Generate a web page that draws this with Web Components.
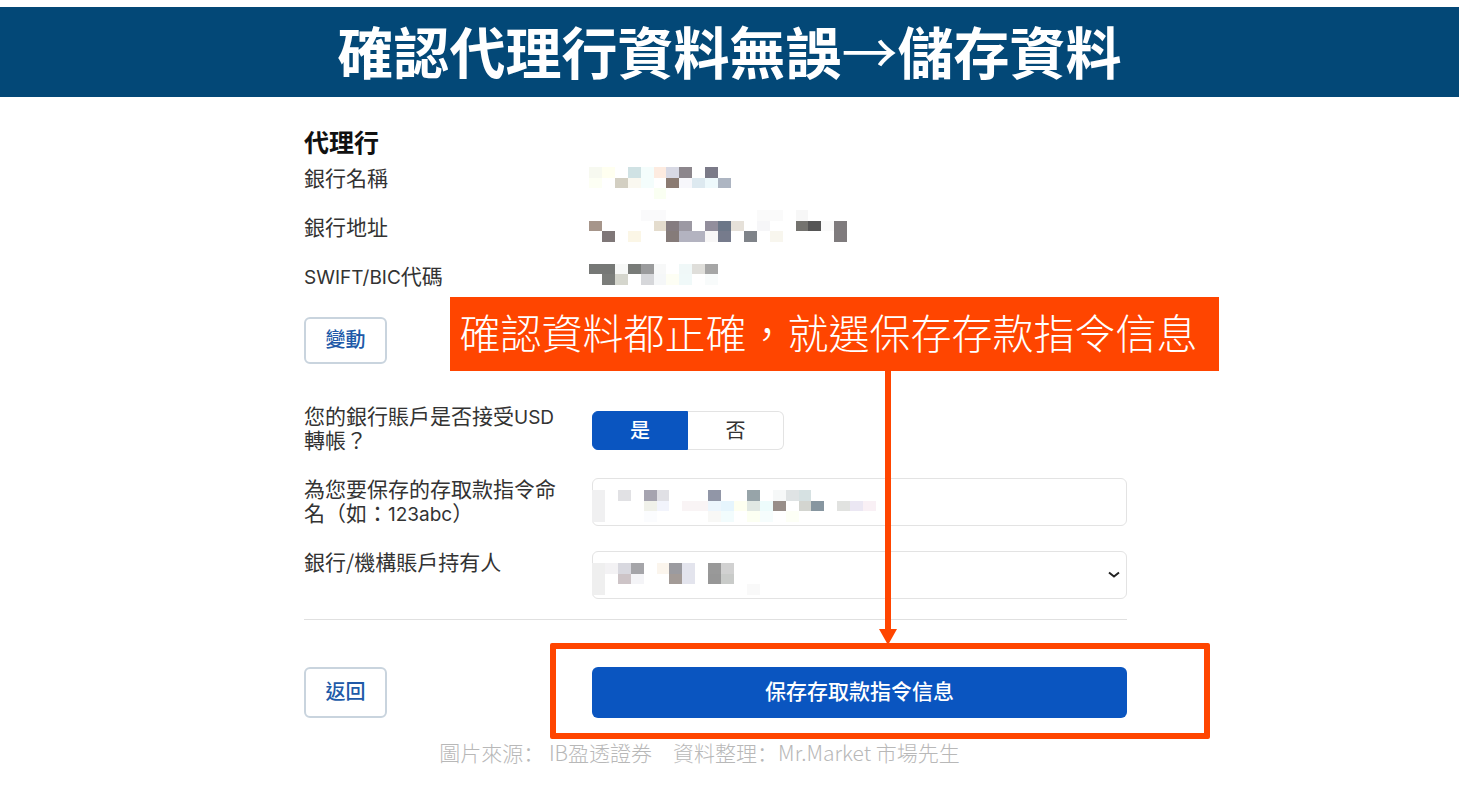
<!DOCTYPE html>
<html lang="zh-Hant">
<head>
<meta charset="utf-8">
<meta name="viewport" content="width=device-width, initial-scale=1">
<title>確認代理行資料</title>
<style>
    body {
        margin: 0;
        background: #fff;
        color: #333;
        font: 21px/24px "Noto Sans CJK TC", sans-serif;
    }

    .latin {
        font-family: Inter, sans-serif;
        font-size: 19px;
        line-height: 1;
    }
</style>
</head>
<body>

<slide-banner>確認代理行資料無誤<span style="font-weight: 400">→</span>儲存資料</slide-banner>

<bank-form>
    <bank-details>
        <span slot="title">代理行</span>
        <span slot="name">銀行名稱</span>
        <span slot="address">銀行地址</span>
        <span slot="code"><span class="latin">SWIFT/BIC</span>代碼</span>
    </bank-details>
    <outline-button class="change">變動</outline-button>
    <choice-field>您的銀行賬戶是否接受<span class="latin">USD</span>轉帳？</choice-field>
    <text-field>為您要保存的存取款指令命名（如：<span class="latin">123abc</span>）</text-field>
    <select-field>銀行/機構賬戶持有人</select-field>
    <form-actions>
        <outline-button slot="back" class="tall">返回</outline-button>
        <save-button slot="save">保存存取款指令信息</save-button>
    </form-actions>
    <note-callout slot="note">確認資料都正確，就選保存存款指令信息</note-callout>
</bank-form>

<source-note lang="zh-Hans">圖片來源： IB盈透證券　資料整理：Mr.Market 市場先生</source-note>

<script>
    function attach(el, html) {
        const template = document.createElement('template');
        template.innerHTML = html;
        el.attachShadow({ mode: 'open' }).appendChild(template.content.cloneNode(true));
    }

    // shared look of the label / control rows
    const rowStyle = `
        :host {
            display: grid;
            grid-template-columns: 288px 1fr;
            min-height: 50px;
            margin-bottom: 23px;
        }
        label, .label {
            padding-right: 36px;
        }
        .control {
            position: relative;
            margin-top: 2px;
        }
        input, select {
            box-sizing: border-box;
            width: 100%;
            height: 48px;
            border: 1px solid #e3e3e3;
            border-radius: 6px;
            background: #fff;
            font: inherit;
        }
        pixel-mask {
            position: absolute;
            left: 0;
            top: 12px;
        }
    `;

    // hides private values: one "column row colour" entry per block
    class PixelMask extends HTMLElement {
        connectedCallback() {
            const rows = Number(this.getAttribute('rows'));
            const blocks = this.getAttribute('blocks').trim().split(/\s*;\s*/).map(block => {
                const [x, y, fill] = block.split(' ');
                return `<rect x="${x}" y="${y}" width="1" height="1" fill="#${fill}"/>`;
            }).join('');
            attach(this, `
                <style>
                :host { display: block; pointer-events: none; }
                svg { display: block; }
                </style>
                <svg width="284" height="${Math.round(rows * 10.7)}" viewBox="0 0 22 ${rows}"
                    preserveAspectRatio="none" shape-rendering="crispEdges" aria-hidden="true">${blocks}</svg>
            `);
        }
    }

    class SlideBanner extends HTMLElement {
        constructor() {
            super();
            attach(this, `
                <style>
                :host {
                    display: block;
                    margin-top: 7px;
                    padding-bottom: 4px;
                    background: #034877;
                    color: #fff;
                    text-align: center;
                }
                h1 {
                    margin: 0;
                    font-size: 56px;
                    line-height: 86px;
                    font-weight: 700;
                }
                </style>
                <h1><slot></slot></h1>
            `);
        }
    }

    class BankForm extends HTMLElement {
        constructor() {
            super();
            attach(this, `
                <style>
                :host {
                    display: grid;
                    grid-template-columns: 304fr 823fr 332fr;
                }
                form {
                    grid-column: 2;
                    position: relative;
                    padding-top: 26px;
                }
                ::slotted(.change) {
                    margin: 28px 0 39px;
                }
                </style>
                <form>
                    <slot></slot>
                    <slot name="note"></slot>
                </form>
            `);
        }
    }

    class BankDetails extends HTMLElement {
        constructor() {
            super();
            attach(this, `
                <style>
                :host { display: block; }
                h2 {
                    margin: 0 0 6px;
                    color: #111;
                    font-size: 25px;
                    line-height: 36px;
                    font-weight: 700;
                }
                .list {
                    display: grid;
                    grid-template-columns: 285px 1fr;
                    height: 124px;
                }
                .names {
                    display: grid;
                    grid-auto-rows: 24px;
                    row-gap: 25px;
                }
                pixel-mask {
                    padding-top: 2px;
                }
                </style>
                <h2><slot name="title"></slot></h2>
                <div class="list">
                    <div class="names">
                        <slot name="name"></slot>
                        <slot name="address"></slot>
                        <slot name="code"></slot>
                    </div>
                    <pixel-mask rows="11" blocks="
                        0 0 f7f9f0; 1 0 fffff0; 3 0 d0e2e4; 4 0 f4fdfc; 5 0 fdebe0; 6 0 d8d9e4; 7 0 8c868c; 9 0 7b7a88;
                        0 1 fdfff4; 2 1 d3cfc2; 3 1 faf8f0; 4 1 f4fdfc; 6 1 8b7b72; 7 1 f7f7fb; 8 1 dde9f0; 9 1 eef9fc; 10 1 adb5c2;
                        5 2 fafff2;
                        4 4 fafafb; 5 4 fafafb; 13 4 fafafa; 14 4 fafafa; 16 4 f7f7f7;
                        0 5 a6958a; 5 5 e4dccd; 6 5 857c80; 7 5 9c99a3; 9 5 928e9c; 10 5 6c7788; 11 5 e6e1d9; 13 5 f6f6f8; 16 5 74736f; 17 5 555555; 18 5 fafafa; 19 5 7f7b7d;
                        1 6 7f7778; 3 6 fbf6e6; 6 6 857b79; 7 6 b3b3c0; 8 6 b3b3c0; 9 6 f8f7f7; 10 6 767b8c; 12 6 7f8389; 14 6 f8f6ee; 19 6 7f7b7d;
                        0 9 767876; 1 9 767876; 2 9 f7f8f7; 3 9 787b78; 4 9 9a9b9c; 5 9 f7f8f8; 7 9 f0f8f8; 8 9 dfdeda; 9 9 a6a6a6;
                        1 10 7b7d7a; 2 10 d5d6cd; 4 10 d6d7da; 5 10 f5f7f8; 6 10 fdfef4; 7 10 f0f9f9; 9 10 f8fbfb"></pixel-mask>
                </div>
            `);
        }
    }

    class OutlineButton extends HTMLElement {
        constructor() {
            super();
            attach(this, `
                <style>
                :host { display: block; }
                button {
                    box-sizing: border-box;
                    width: 83px;
                    height: 47px;
                    padding: 0 0 4px;
                    border: 2px solid #c9d4de;
                    border-radius: 6px;
                    background: #fff;
                    color: #2059a8;
                    font: inherit;
                    font-size: 20px;
                    font-weight: 500;
                    cursor: pointer;
                }
                :host(.tall) button { height: 51px; }
                </style>
                <button type="button"><slot></slot></button>
            `);
        }
    }

    class ChoiceField extends HTMLElement {
        constructor() {
            super();
            attach(this, `
                <style>
                ${rowStyle}
                .toggle {
                    display: inline-grid;
                    grid-template-columns: 96px 96px;
                    margin-top: 6px;
                }
                .toggle label {
                    box-sizing: border-box;
                    height: 39px;
                    padding: 0;
                    border: 1px solid #e3e3e3;
                    border-left: 0;
                    border-radius: 0 6px 6px 0;
                    font-size: 20px;
                    line-height: 36px;
                    text-align: center;
                    cursor: pointer;
                }
                .toggle label:first-child {
                    border: 1px solid #0a55c0;
                    border-radius: 6px 0 0 6px;
                }
                .toggle label:has(:checked) {
                    background: #0a55c0;
                    color: #fff;
                    font-weight: 500;
                }
                .toggle input {
                    position: absolute;
                    width: 1px;
                    height: 1px;
                    margin: 0;
                    opacity: 0;
                }
                </style>
                <div class="label" id="question"><slot></slot></div>
                <div class="control">
                    <div class="toggle" role="radiogroup" aria-labelledby="question">
                        <label><input type="radio" name="usd" value="yes" checked>是</label>
                        <label><input type="radio" name="usd" value="no">否</label>
                    </div>
                </div>
            `);
        }
    }

    class TextField extends HTMLElement {
        constructor() {
            super();
            attach(this, `
                <style>${rowStyle}</style>
                <label for="name"><slot></slot></label>
                <div class="control">
                    <input id="name" type="text">
                    <pixel-mask rows="3" blocks="
                        0 0 f0f0f1; 2 0 e1e1e4; 4 0 a6a4b0; 5 0 e0e0e5; 9 0 9196a7; 12 0 97a4a9; 14 0 f6f8f8; 15 0 dfe3e4; 16 0 d6e1e2;
                        0 1 f0f0f1; 4 1 f0f1ea; 5 1 f2f4fc; 7 1 f9f4f5; 8 1 f9f4f5; 9 1 edf6fd; 10 1 e6f5fd; 11 1 fefff0; 12 1 e1e8e3; 13 1 edfcfc; 14 1 988e89; 16 1 d3d5d0; 17 1 8796a0; 19 1 e1e2e0; 20 1 ebe7f3; 21 1 f9f0f5;
                        0 2 f0f0f1; 4 2 fbfcfe; 9 2 f8f8f6; 10 2 f2fcfd; 12 2 fcfff2; 13 2 f6fdfd; 15 2 fdfff6"></pixel-mask>
                </div>
            `);
        }
    }

    class SelectField extends HTMLElement {
        constructor() {
            super();
            attach(this, `
                <style>
                ${rowStyle}
                :host { margin-bottom: 20px; }
                select {
                    appearance: none;
                }
                .chevron {
                    position: absolute;
                    right: 7px;
                    top: 20px;
                    pointer-events: none;
                }
                </style>
                <label for="holder"><slot></slot></label>
                <div class="control">
                    <select id="holder"><option></option></select>
                    <pixel-mask rows="3" blocks="
                        0 0 efefef; 1 0 f3f2f4; 2 0 d8d8df; 3 0 a5a5a9; 5 0 fbf5ed; 6 0 9b9ba0; 7 0 e3e4ed; 9 0 999999; 10 0 d1d1d1;
                        0 1 efefef; 2 1 cdc4c7; 3 1 f4f4f7; 6 1 a39b97; 7 1 e3e4ed; 9 1 979797; 10 1 c9cbc9;
                        0 2 efefef; 12 2 f9f9f9"></pixel-mask>
                    <svg class="chevron" width="12" height="8" viewBox="0 0 12 8" aria-hidden="true">
                        <path d="M1 1.5 6 5.5 11 1.5" fill="none" stroke="#222" stroke-width="2"/>
                    </svg>
                </div>
            `);
        }
    }

    class FormActions extends HTMLElement {
        constructor() {
            super();
            attach(this, `
                <style>
                :host {
                    display: grid;
                    grid-template-columns: 288px 1fr;
                    padding-top: 47px;
                    border-top: 1px solid #e0e0e0;
                }
                </style>
                <slot name="back"></slot>
                <slot name="save"></slot>
            `);
        }
    }

    class SaveButton extends HTMLElement {
        constructor() {
            super();
            attach(this, `
                <style>
                :host {
                    display: block;
                    position: relative;
                }
                button {
                    width: 100%;
                    height: 51px;
                    padding: 0 0 6px;
                    border: 0;
                    border-radius: 6px;
                    background: #0a55c0;
                    color: #fff;
                    font: inherit;
                    font-weight: 500;
                    cursor: pointer;
                }
                /* marker frame drawn round the button */
                .frame {
                    position: absolute;
                    inset: -24px -83px -21px -42px;
                    border: 6px solid #ff4500;
                    border-radius: 2px;
                    pointer-events: none;
                }
                </style>
                <button type="submit"><slot></slot></button>
                <div class="frame"></div>
            `);
        }
    }

    class NoteCallout extends HTMLElement {
        constructor() {
            super();
            attach(this, `
                <style>
                :host {
                    position: absolute;
                    left: 146px;
                    right: -92px;
                    top: 200px;
                    pointer-events: none;
                }
                .box {
                    box-sizing: border-box;
                    height: 74px;
                    padding-right: 12px;
                    background: #ff4500;
                    color: #fff;
                    font-size: 41px;
                    line-height: 68px;
                    font-weight: 300;
                    text-align: center;
                    white-space: nowrap;
                }
                svg {
                    display: block;
                    margin-left: 429px;
                }
                </style>
                <div class="box"><slot></slot></div>
                <svg width="18" height="274" viewBox="0 0 18 274" fill="#ff4500" aria-hidden="true">
                    <path d="M6 0h6v258h6l-9 16-9-16h6z"/>
                </svg>
            `);
        }
    }

    class SourceNote extends HTMLElement {
        constructor() {
            super();
            attach(this, `
                <style>
                :host {
                    display: block;
                    padding: 22px 60px 20px 0;
                    color: #b8b8b8;
                    font-family: "Noto Sans CJK SC", sans-serif;
                    font-weight: 300;
                    text-align: center;
                }
                </style>
                <slot></slot>
            `);
        }
    }

    customElements.define('pixel-mask', PixelMask);
    customElements.define('slide-banner', SlideBanner);
    customElements.define('bank-form', BankForm);
    customElements.define('bank-details', BankDetails);
    customElements.define('outline-button', OutlineButton);
    customElements.define('choice-field', ChoiceField);
    customElements.define('text-field', TextField);
    customElements.define('select-field', SelectField);
    customElements.define('form-actions', FormActions);
    customElements.define('save-button', SaveButton);
    customElements.define('note-callout', NoteCallout);
    customElements.define('source-note', SourceNote);
</script>
</body>
</html>
